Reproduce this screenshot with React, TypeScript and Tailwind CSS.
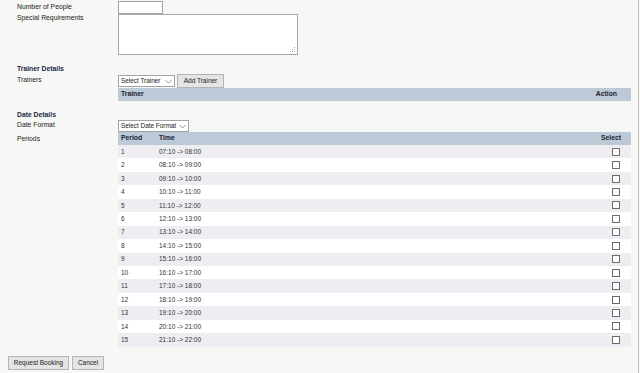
import React from "react";

const periods = [
  ["1", "07:10 -> 08:00"],
  ["2", "08:10 -> 09:00"],
  ["3", "09:10 -> 10:00"],
  ["4", "10:10 -> 11:00"],
  ["5", "11:10 -> 12:00"],
  ["6", "12:10 -> 13:00"],
  ["7", "13:10 -> 14:00"],
  ["8", "14:10 -> 15:00"],
  ["9", "15:10 -> 16:00"],
  ["10", "16:10 -> 17:00"],
  ["11", "17:10 -> 18:00"],
  ["12", "18:10 -> 19:00"],
  ["13", "19:10 -> 20:00"],
  ["14", "20:10 -> 21:00"],
  ["15", "21:10 -> 22:00"],
];

function Chevron() {
  return (
    <svg width="7" height="5" viewBox="0 0 7 5" className="shrink-0">
      <polyline points="0.5,1 3.5,4 6.5,1" fill="none" stroke="#777" strokeWidth="0.8" />
    </svg>
  );
}

function Grip() {
  return (
    <svg width="6" height="6" viewBox="0 0 6 6" className="absolute right-[2px] bottom-[2px]">
      <rect x="4" y="0" width="1" height="1" fill="#aaa" />
      <rect x="2" y="2" width="1" height="1" fill="#aaa" />
      <rect x="4" y="2" width="1" height="1" fill="#aaa" />
      <rect x="0" y="4" width="1" height="1" fill="#aaa" />
      <rect x="2" y="4" width="1" height="1" fill="#aaa" />
      <rect x="4" y="4" width="1" height="1" fill="#aaa" />
    </svg>
  );
}

export default function App() {
  return (
    <div className="w-[640px] h-[373px] bg-[#f7f7f5] font-['Liberation_Sans',Arial,sans-serif] text-[6.8px] text-[#222] overflow-hidden">
      <div className="w-[639px] h-full border-r border-[#c4c4c4] flex flex-col pt-[1px]">
        {/* Number of People */}
        <div className="flex h-[13px]">
          <div className="w-[118px] shrink-0 pl-[17px] leading-[11px]">Number of People</div>
          <div className="w-[45px] h-[13px] border border-[#a3a3a3] bg-white" />
        </div>
        {/* Special Requirements */}
        <div className="flex h-[41px]">
          <div className="w-[118px] shrink-0 pl-[17px] leading-[8px]">Special Requirements</div>
          <div className="relative w-[180px] h-[41px]">
            <textarea className="block w-[180px] h-[41px] border border-[#a8a8a8] bg-white outline-none resize-none" />
            <Grip />
          </div>
        </div>

        {/* Trainer Details */}
        <div className="mt-[10px] h-[8px] leading-[8px] pl-[17px] font-bold text-[#1b2a48]">Trainer Details</div>
        <div className="flex h-[14px] mt-[1px]">
          <div className="w-[118px] shrink-0 pl-[17px] leading-[12px]">Trainers</div>
          <div className="mt-[1px] w-[57px] h-[12px] border border-[#a3a3a3] bg-white flex items-center justify-between pl-[2px] pr-[2px] text-[6.4px] text-[#222]">
            <span>Select Trainer</span>
            <Chevron />
          </div>
          <div className="ml-[2px] w-[47px] h-[14px] border border-[#b4b4b4] bg-[#e4e4e4] flex items-center justify-center text-[6.5px] text-[#222]">
            Add Trainer
          </div>
        </div>
        <div className="flex">
          <div className="w-[118px] shrink-0" />
          <div className="w-[513px] h-[13px] bg-[#bcc9d6] flex items-center justify-between pl-[3px] pr-[14px] font-bold text-[#1c2233]">
            <span>Trainer</span>
            <span>Action</span>
          </div>
        </div>

        {/* Date Details */}
        <div className="mt-[10px] h-[8px] leading-[8px] pl-[17px] font-bold text-[#1b2a48]">Date Details</div>
        <div className="flex h-[13px]">
          <div className="w-[118px] shrink-0 pl-[17px] leading-[11px]">Date Format</div>
          <div className="mt-[1px] w-[71px] h-[12px] border border-[#a3a3a3] bg-white flex items-center justify-between pl-[2px] pr-[2px] text-[6.4px] text-[#222]">
            <span>Select Date Format</span>
            <Chevron />
          </div>
        </div>
        <div className="flex">
          <div className="w-[118px] shrink-0 pl-[17px] leading-[13px]">Periods</div>
          <div className="w-[513px] flex flex-col">
            <div className="h-[13px] bg-[#bcc9d6] flex items-center font-bold text-[#1c2233]">
              <span className="w-[41px] pl-[3px]">Period</span>
              <span className="flex-1">Time</span>
              <span className="pr-[10px]">Select</span>
            </div>
            {periods.map(([n, t], i) => (
              <div
                key={n}
                className={`h-[13.45px] flex items-center text-[6.5px] text-[#333] ${i % 2 === 0 ? "bg-[#ededf2]" : "bg-white"}`}
              >
                <span className="w-[41px] pl-[3px]">{n}</span>
                <span className="flex-1">{t}</span>
                <span className="mr-[11px] w-[8px] h-[8px] border border-[#6a6a6a] bg-white" />
              </div>
            ))}
          </div>
        </div>

        {/* Buttons */}
        <div className="mt-[9.5px] flex pl-[8px] gap-[3px]">
          <div className="w-[61px] h-[14px] border border-[#b4b4b4] bg-[#e4e4e4] flex items-center justify-center text-[6.5px] text-[#222]">
            Request Booking
          </div>
          <div className="w-[32px] h-[14px] border border-[#b4b4b4] bg-[#e4e4e4] flex items-center justify-center text-[6.5px] text-[#222]">
            Cancel
          </div>
        </div>
      </div>
    </div>
  );
}
